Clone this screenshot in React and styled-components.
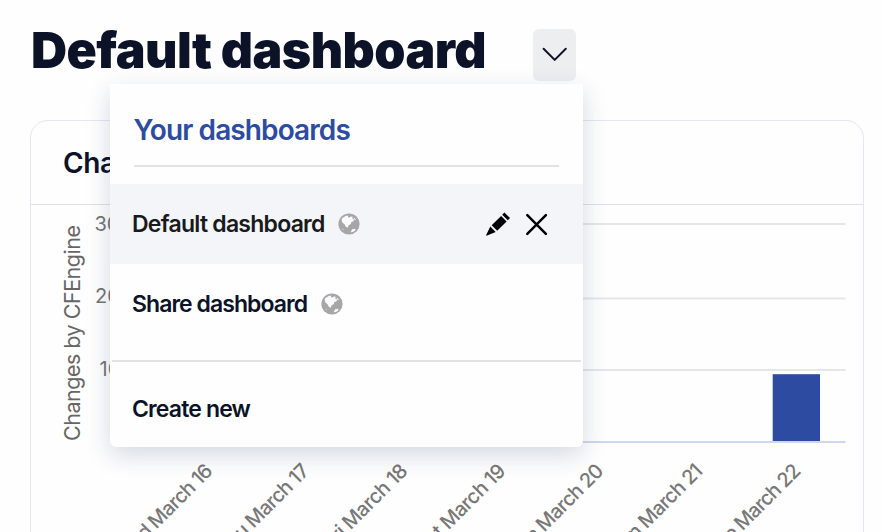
import React from 'react';
import styled, { createGlobalStyle } from 'styled-components';

const GlobalStyle = createGlobalStyle`
  * { box-sizing: border-box; }
  html, body { margin: 0; overflow: hidden; background: #fefefe; }
  body { font-family: Inter, "Noto Sans", sans-serif; color: #0c1228; }
`;

const Page = styled.main`
  width: 882px;
  height: 532px;
  overflow: hidden;
  padding: 29px 18px 0 30px;
`;

const Header = styled.header`
  position: relative;
  display: flex;
  align-items: flex-start;
  height: 91px;
`;

const PageTitle = styled.h1`
  margin: -9px 0 0;
  width: 503px;
  padding-left: 1px;
  font-size: 50px;
  line-height: 60px;
  font-weight: 900;
  letter-spacing: -0.55px;
  white-space: nowrap;
`;

const ToggleButton = styled.button`
  display: flex;
  align-items: center;
  justify-content: center;
  width: 43px;
  height: 52px;
  padding: 0 0 1px;
  border: 0;
  border-radius: 6px;
  background: #edeef0;
`;

const Menu = styled.div`
  position: absolute;
  z-index: 2;
  top: 55px;
  left: 80px;
  width: 473px;
  height: 363px;
  background: #fefefe;
  border-radius: 1px 1px 6px 6px;
  box-shadow: 0 8px 24px rgba(20, 44, 92, 0.18);
`;

const MenuHeading = styled.h2`
  display: flex;
  align-items: center;
  margin: 0 24px 17px;
  height: 83px;
  padding-top: 10px;
  border-bottom: 2px solid #e2e2e3;
  color: #2d4ca1;
  font-size: 28px;
  font-weight: 600;
  letter-spacing: -0.9px;
  text-indent: -0.5px;
  white-space: nowrap;
`;

const MenuItem = styled.div`
  display: flex;
  align-items: center;
  height: 80px;
  padding: 0 35px 0 22px;
  color: ${(p) => (p.$active ? '#191a1c' : '#0c1228')};
  background: ${(p) => (p.$active ? '#f4f5f9' : 'transparent')};
`;

const ItemLabel = styled.span`
  width: ${(p) => p.$width}px;
  font-size: 23px;
  font-weight: 600;
  letter-spacing: ${(p) => p.$tracking}px;
  white-space: nowrap;
`;

const Actions = styled.div`
  display: flex;
  align-items: center;
  gap: 14px;
  margin-left: auto;
`;

const MenuFooter = styled.div`
  display: flex;
  align-items: center;
  height: 87px;
  margin: 16px 2px 0;
  padding: 9px 20px 0;
  border-top: 2px solid #e2e2e3;
`;

const Card = styled.section`
  width: 834px;
  height: 460px;
  border: 1px solid #e4e6f1;
  border-radius: 18px;
`;

const CardHeader = styled.div`
  display: flex;
  align-items: center;
  height: 84px;
  padding: 0 32px;
  border-bottom: 1px solid #dfe0e2;
  font-size: 28px;
  font-weight: 600;
  letter-spacing: -0.4px;
`;

const Chart = styled.svg`
  display: block;
  width: 832px;
  height: 328px;
  font-family: Inter, "Noto Sans", sans-serif;
  font-size: 20px;
`;

function Globe() {
  return (
    <svg width="22" height="22" viewBox="0 0 22 22">
      <circle cx="11" cy="11" r="10.6" fill="#a6a6a6" />
      <path
        fill="#fafafc"
        d="M4.1 5.2 8 2.7l2.4.1-.6 1.5 2 .2.9-1 2 .3-.4 2 2 .8-1 1.8-2 .7-.4 2-2.5 1.4-.5 2.2-2.1-1-1.3-2.5-2.2-1.7-.7-2.4zM15.4 4.7l1.5.6 1.3 2-1.7-.7zM14.1 16.2l3-.4.4 1.4-2.6 1.8-2.3.3zM4.6 15.6l1.2 1.5-1.1-.3z"
      />
    </svg>
  );
}

function Pencil() {
  return (
    <svg width="25" height="25" viewBox="486 211 25 25">
      <path d="M504.4 211.4 510 217l-2.2 2.2-5.6-5.5zM501.1 215l5.5 5.5-9.4 9.3-5.5-5.5zM490.3 225.4l5.4 5.5-8.6 3.7q-1.2.4-.8-.8z" />
    </svg>
  );
}

function Close() {
  return (
    <svg width="23" height="23" viewBox="525 213 23 23">
      <path d="m527.3 215.2 18.6 18.6m0-18.6-18.6 18.6" stroke="#000" strokeWidth="2.5" strokeLinecap="round" />
    </svg>
  );
}

function Chevron() {
  return (
    <svg width="27" height="15" viewBox="541 46 27 15">
      <path
        d="m543.6 47.8 11.1 11.1 11.1-11.1"
        fill="none"
        stroke="#0c1228"
        strokeWidth="2"
        strokeLinecap="round"
        strokeLinejoin="round"
      />
    </svg>
  );
}

const ticks = [
  { label: '30', x: 94.5, baseline: 231, line: 224 },
  { label: '20', x: 95, baseline: 303, line: 298.5 },
  { label: '10', x: 99.5, baseline: 376, line: 369.9 },
];

const days = [
  { label: 'Wed March 16', x: 214, y: 472, w: 127 },
  { label: 'Thu March 17', x: 310.5, y: 472, w: 120 },
  { label: 'Fri March 18', x: 409, y: 472, w: 110 },
  { label: 'Sat March 19', x: 507, y: 472, w: 117 },
  { label: 'Sun March 20', x: 605, y: 472, w: 125 },
  { label: 'Mon March 21', x: 704, y: 472, w: 126 },
  { label: 'Tue March 22', x: 802, y: 472, w: 121 },
];

function ChangesChart() {
  return (
    <Chart viewBox="31 205 832 328">
      {ticks.map((t) => (
        <g key={t.label}>
          <path d={`M120 ${t.line}H845.5`} stroke="#e5e6e7" strokeWidth="2" />
          <text x={t.x} y={t.baseline} fill="#757576">{t.label}</text>
        </g>
      ))}
      <rect x="772.7" y="374.2" width="47.3" height="67.5" fill="#2d4ca1" />
      <path d="M120 442H845.5" stroke="#cfd7ea" strokeWidth="2" />
      <text
        transform="translate(79.5 441) rotate(-90)"
        fill="#666"
        fontSize="21.5"
        textLength="216"
        lengthAdjust="spacing"
      >
        Changes by CFEngine
      </text>
      {days.map((d) => (
        <text
          key={d.label}
          transform={`translate(${d.x} ${d.y}) rotate(-45)`}
          fill="#787878"
          fontWeight="500"
          textAnchor="end"
          textLength={d.w}
          lengthAdjust="spacing"
        >
          {d.label}
        </text>
      ))}
    </Chart>
  );
}

export default function App() {
  return (
    <>
      <GlobalStyle />
      <Page>
        <Header>
          <PageTitle>Default dashboard</PageTitle>
          <ToggleButton aria-label="Select dashboard">
            <Chevron />
          </ToggleButton>
          <Menu>
            <MenuHeading>Your dashboards</MenuHeading>
            <MenuItem $active>
              <ItemLabel $width={206} $tracking={-0.75}>Default dashboard</ItemLabel>
              <Globe />
              <Actions>
                <Pencil />
                <Close />
              </Actions>
            </MenuItem>
            <MenuItem>
              <ItemLabel $width={189} $tracking={-0.95}>Share dashboard</ItemLabel>
              <Globe />
            </MenuItem>
            <MenuFooter>
              <ItemLabel $width={130} $tracking={-0.85}>Create new</ItemLabel>
            </MenuFooter>
          </Menu>
        </Header>
        <Card>
          <CardHeader>Changes</CardHeader>
          <ChangesChart />
        </Card>
      </Page>
    </>
  );
}
